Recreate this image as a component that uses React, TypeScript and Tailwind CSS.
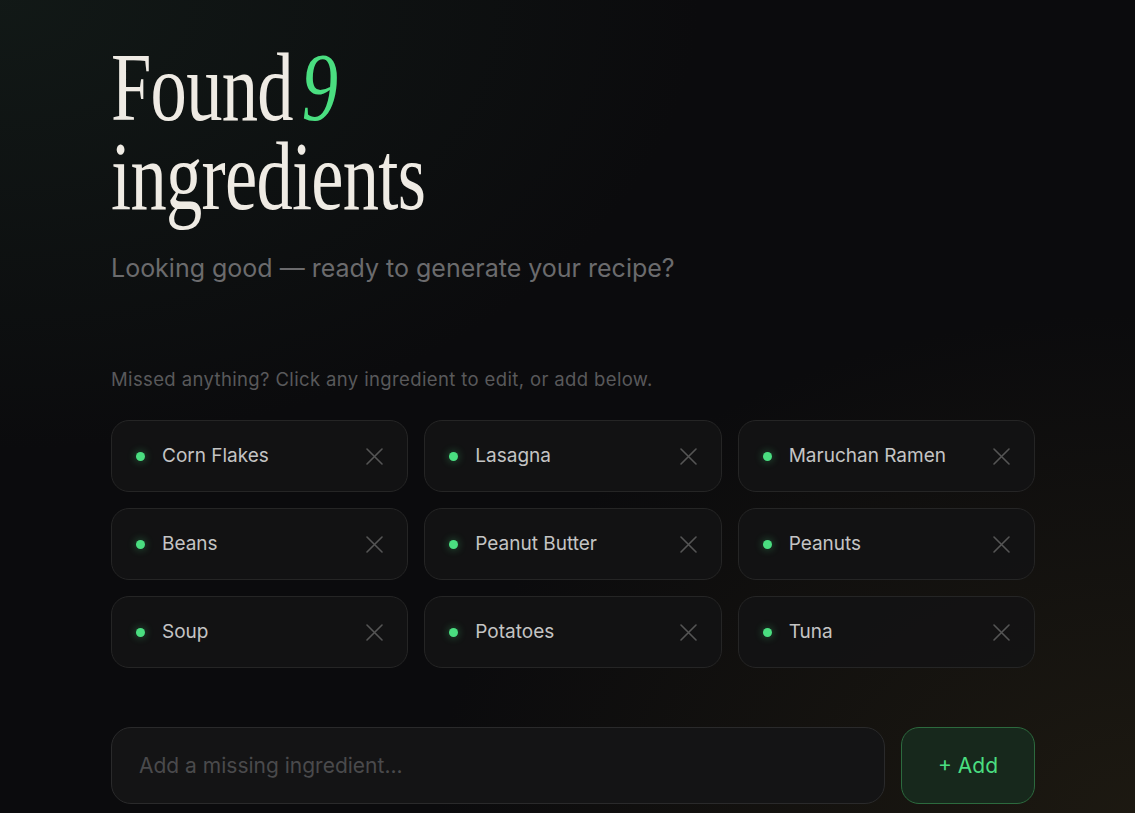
import React from "react";

const ingredients = [
  "Corn Flakes",
  "Lasagna",
  "Maruchan Ramen",
  "Beans",
  "Peanut Butter",
  "Peanuts",
  "Soup",
  "Potatoes",
  "Tuna",
];

function CloseIcon() {
  return (
    <svg width="17" height="17" viewBox="0 0 17 17" fill="none" className="text-[#555555]">
      <path d="M1 1 L16 16 M16 1 L1 16" stroke="currentColor" strokeWidth="1.6" strokeLinecap="round" />
    </svg>
  );
}

function Chip({ name }: { name: string }) {
  return (
    <div className="flex h-[72px] items-center rounded-[18px] border border-[#252525] bg-[#131314]/90 pl-[24px] pr-[24px]">
      <span className="h-[9px] w-[9px] rounded-full bg-[#4ade80] shadow-[0_0_8px_rgba(74,222,128,0.45)]" />
      <span className="ml-[17px] flex-1 text-[19px] text-[#c4c4c4]">{name}</span>
      <CloseIcon />
    </div>
  );
}

export default function App() {
  return (
    <div
      className="relative min-h-[813px] w-full overflow-hidden bg-[#0b0b0d]"
      style={{ fontFamily: "Inter, 'Noto Sans', sans-serif" }}
    >
      {/* background glows */}
      <div className="pointer-events-none absolute inset-0 bg-[radial-gradient(ellipse_700px_450px_at_0%_0%,rgba(24,38,32,0.5),transparent)]" />
      <div className="pointer-events-none absolute inset-0 bg-[radial-gradient(ellipse_700px_500px_at_100%_100%,rgba(40,34,20,0.6),transparent)]" />

      <div className="relative ml-[111px] w-[924px] pt-[43px]">
        <h1
          className="origin-left scale-x-[0.74] text-[98px] leading-[89px] tracking-[-0.01em] text-[#efebe4]"
          style={{ fontFamily: "'Liberation Serif', 'Times New Roman', serif" }}
        >
          <span className="whitespace-nowrap">
            Found<span className="ml-[12px] inline-block italic text-[#4ade80]">9</span>
          </span>
          <br />
          ingredients
        </h1>

        <p className="mt-[29px] text-[25px] text-[#6b6b6d]">
          Looking good — ready to generate your recipe?
        </p>

        <p className="mt-[78px] text-[18.5px] tracking-[0.02em] text-[#59595b]">
          Missed anything? Click any ingredient to edit, or add below.
        </p>

        <div className="mt-[27px] grid grid-cols-3 gap-x-[16px] gap-y-[16px]">
          {ingredients.map((name) => (
            <Chip key={name} name={name} />
          ))}
        </div>

        <div className="mt-[59px] flex gap-[16px]">
          <input
            placeholder="Add a missing ingredient..."
            className="h-[77px] flex-1 rounded-[20px] border border-[#2a2a2b] bg-[#141415] px-[27px] text-[21px] text-[#c4c4c4] outline-none placeholder:text-[#4a4a4c]"
          />
          <button className="h-[77px] w-[134px] rounded-[18px] border border-[#2c6a3e] bg-[#17281c] text-[21px] text-[#4ade80]">
            + Add
          </button>
        </div>
      </div>
    </div>
  );
}
